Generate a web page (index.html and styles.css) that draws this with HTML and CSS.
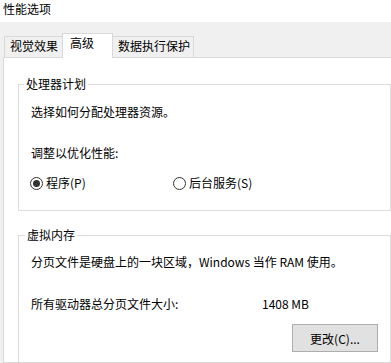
FILE: index.html
```html
<!DOCTYPE html>
<html lang="zh-CN">
<head>
<meta charset="utf-8">
<title>性能选项</title>
<link rel="stylesheet" href="styles.css">
</head>
<body>
<div class="titlebar">性能选项</div>
<div class="window">
  <div class="tabs">
    <div class="tab tab-first">视觉效果</div>
    <div class="tab tab-active">高级</div>
    <div class="tab tab-last">数据执行保护</div>
  </div>
  <div class="panel">
    <fieldset class="group group-cpu">
      <legend>处理器计划</legend>
      <div class="row desc">选择如何分配处理器资源。</div>
      <div class="row adjust">调整以优化性能:</div>
      <div class="row radios">
        <label class="radio radio-prog"><span class="circle checked"></span>程序(P)</label>
        <label class="radio"><span class="circle"></span>后台服务(S)</label>
      </div>
    </fieldset>
    <fieldset class="group group-mem">
      <legend>虚拟内存</legend>
      <div class="row desc2">分页文件是硬盘上的一块区域，Windows 当作 RAM 使用。</div>
      <div class="row size">
        <span class="size-label">所有驱动器总分页文件大小:</span>
        <span class="size-value">1408 MB</span>
      </div>
      <div class="btnrow">
        <button class="btn" type="button">更改(C)...</button>
      </div>
    </fieldset>
  </div>
</div>
</body>
</html>
```

FILE: styles.css
```css
html, body {
  margin: 0;
  padding: 0;
}
body {
  width: 391px;
  height: 363px;
  overflow: hidden;
  background: #ffffff;
  font-family: "Noto Sans CJK SC", "Microsoft YaHei", sans-serif;
  font-size: 12px;
  color: #000;
}
.titlebar {
  height: 22px;
  line-height: 16px;
  padding-left: 3px;
  padding-top: 1px;
  box-sizing: border-box;
  background: #ffffff;
}
.window {
  background: #f0f0f0;
  padding-left: 3px;
  height: 341px;
  box-sizing: border-box;
}
.tabs {
  display: flex;
  align-items: flex-end;
  height: 35px;
  padding-left: 1px;
}
.tab {
  box-sizing: border-box;
  height: 21px;
  line-height: 18px;
  border-top: 1px solid #d9d9d9;
  background: #f0f0f0;
  white-space: nowrap;
}
.tab-first {
  width: 58px;
  padding-left: 5px;
  border-left: 1px solid #d9d9d9;
}
.tab-active {
  position: relative;
  z-index: 1;
  width: 51px;
  height: 25px;
  margin-bottom: -1px;
  padding-left: 7px;
  line-height: 18px;
  background: #ffffff;
  border-left: 1px solid #d9d9d9;
  border-right: 1px solid #d9d9d9;
}
.tab-last {
  width: 81px;
  padding-left: 5px;
  border-right: 1px solid #d9d9d9;
}
.panel {
  background: #ffffff;
  border: 1px solid #d9d9d9;
  border-right: none;
  height: 306px;
  padding: 19px 0 0 14px;
  box-sizing: border-box;
  overflow: hidden;
}
.group {
  margin: 0;
  padding: 0 0 0 12px;
  width: 373px;
  box-sizing: border-box;
  border: 1px solid #dcdcdc;
  min-width: 0;
}
.group legend {
  padding: 0 2px;
  margin-left: -7px;
  line-height: 14px;
  height: 14px;
}
.row {
  line-height: 16px;
  height: 16px;
  white-space: nowrap;
}
.group-cpu {
  padding-bottom: 19px;
}
.desc {
  margin-top: 13px;
}
.adjust {
  margin-top: 25px;
}
.radios {
  margin-top: 14px;
  display: flex;
  align-items: center;
}
.radio {
  display: flex;
  align-items: center;
  gap: 3px;
}
.radio-prog {
  width: 143px;
  margin-left: -1px;
}
.circle {
  box-sizing: border-box;
  width: 13px;
  height: 13px;
  border: 1px solid #333333;
  border-radius: 50%;
  display: flex;
  align-items: center;
  justify-content: center;
}
.circle.checked::after {
  content: "";
  width: 7px;
  height: 7px;
  border-radius: 50%;
  background: #333333;
}
.group-mem {
  margin-top: 17px;
  height: 140px;
}
.group-mem legend {
  margin-left: -6px;
}
.desc2 {
  margin-top: 12px;
}
.size {
  margin-top: 26px;
  display: grid;
  grid-template-columns: 231px auto;
}
.btnrow {
  display: flex;
  justify-content: flex-end;
  padding-right: 12px;
  margin-top: 12px;
}
.btn {
  width: 86px;
  height: 28px;
  box-sizing: border-box;
  background: #e1e1e1;
  border: 1px solid #adadad;
  border-radius: 0;
  font-family: "Noto Sans CJK SC", "Microsoft YaHei", sans-serif;
  font-size: 12px;
  color: #000;
  padding: 0;
}
```
